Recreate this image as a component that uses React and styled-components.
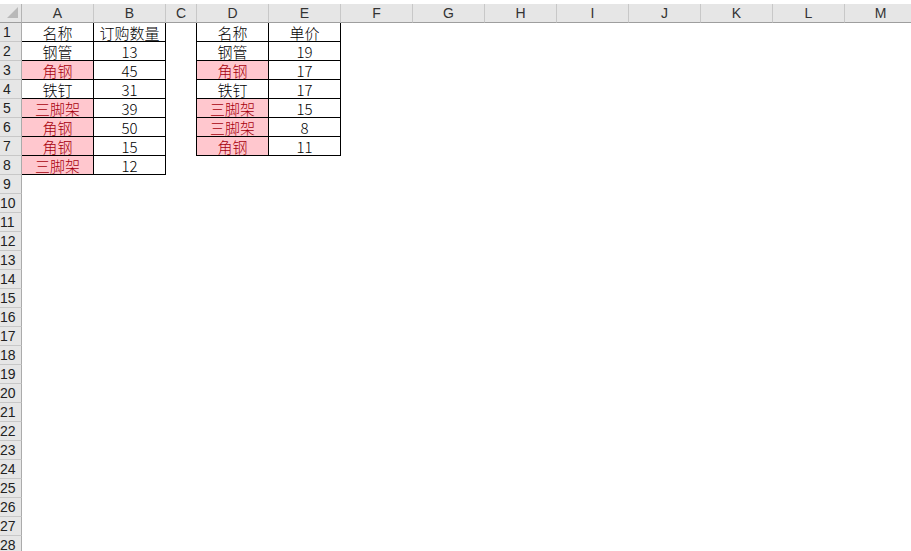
import React from 'react';
import styled, { createGlobalStyle } from 'styled-components';

const GlobalStyle = createGlobalStyle`
  html, body {
    margin: 0;
    padding: 0;
    background: #fff;
    overflow: hidden;
  }
  body {
    font-family: "Liberation Sans", "Noto Sans CJK SC", sans-serif;
  }
`;

const Page = styled.div`
  width: 911px;
  height: 551px;
  overflow: hidden;
  padding-top: 4px;
  box-sizing: border-box;
`;

const Sheet = styled.div`
  display: grid;
  grid-template-columns: 22px 72px 72px 31px 72px 72px repeat(8, 72px);
  grid-auto-rows: 19px;
  font-size: 14px;
`;

const Corner = styled.div`
  display: flex;
  justify-content: flex-end;
  align-items: flex-end;
  padding: 0 3px 4px 0;
  box-sizing: border-box;
  background: #e6e6e6;
  border-right: 1px solid #b4b4b4;
  border-bottom: 1px solid #9e9e9e;
`;

const Triangle = styled.div`
  width: 0;
  height: 0;
  border-left: 11px solid transparent;
  border-bottom: 11px solid #b9b9b9;
`;

const ColHead = styled.div`
  box-sizing: border-box;
  background: #e6e6e6;
  border-right: 1px solid #c8c8c8;
  border-bottom: 1px solid #9e9e9e;
  color: #333;
  text-align: center;
  line-height: 18px;
`;

const RowHead = styled.div`
  box-sizing: border-box;
  background: #e6e6e6;
  border-right: 1px solid #ababab;
  border-bottom: 1px solid #c8c8c8;
  color: #222;
  line-height: 18px;
  padding-left: ${p => (p.$wide ? 0 : 3)}px;
  white-space: nowrap;
  overflow: hidden;
`;

const Cell = styled.div`
  box-sizing: border-box;
  background: ${p => (p.$pink ? '#ffc7ce' : '#fff')};
  color: ${p => (p.$pink ? '#a8000c' : '#000')};
  border-right: ${p => (p.$boxed ? '1px solid #000' : 'none')};
  border-bottom: ${p => (p.$boxed ? '1px solid #000' : 'none')};
  box-shadow: ${p => (p.$lead ? '-1px 0 0 #000' : 'none')};
  font-family: "Noto Sans CJK SC", "Liberation Sans", sans-serif;
  font-size: 15px;
  font-weight: 300;
  text-align: center;
  line-height: 19px;
  white-space: nowrap;
`;

const columns = ['A', 'B', 'C', 'D', 'E', 'F', 'G', 'H', 'I', 'J', 'K', 'L', 'M'];

const orders = [
  ['名称', '订购数量', false],
  ['钢管', '13', false],
  ['角钢', '45', true],
  ['铁钉', '31', false],
  ['三脚架', '39', true],
  ['角钢', '50', true],
  ['角钢', '15', true],
  ['三脚架', '12', true],
];

const prices = [
  ['名称', '单价', false],
  ['钢管', '19', false],
  ['角钢', '17', true],
  ['铁钉', '17', false],
  ['三脚架', '15', true],
  ['三脚架', '8', true],
  ['角钢', '11', true],
];

const rowCount = 28;

const App = () => {
  const rows = [];
  for (let r = 1; r <= rowCount; r++) {
    const a = orders[r - 1];
    const d = prices[r - 1];
    rows.push(
      <React.Fragment key={r}>
        <RowHead $wide={r >= 10}>{r}</RowHead>
        <Cell $boxed={!!a} $pink={a && a[2]}>{a && a[0]}</Cell>
        <Cell $boxed={!!a}>{a && a[1]}</Cell>
        <Cell />
        <Cell $boxed={!!d} $lead={!!d} $pink={d && d[2]}>{d && d[0]}</Cell>
        <Cell $boxed={!!d}>{d && d[1]}</Cell>
        {columns.slice(5).map(c => <Cell key={c} />)}
      </React.Fragment>
    );
  }

  return (
    <Page>
      <GlobalStyle />
      <Sheet>
        <Corner><Triangle /></Corner>
        {columns.map(c => <ColHead key={c}>{c}</ColHead>)}
        {rows}
      </Sheet>
    </Page>
  );
};

export default App;
